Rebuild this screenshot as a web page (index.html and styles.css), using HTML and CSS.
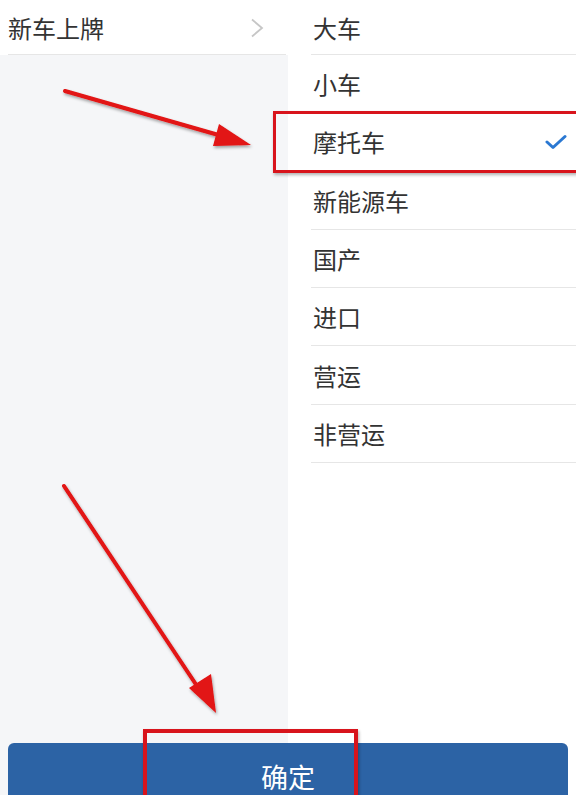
FILE: index.html
```html
<!DOCTYPE html>
<html lang="zh-CN">
<head>
  <meta charset="UTF-8" />
  <meta name="viewport" content="width=device-width, initial-scale=1.0"/>
  <title>车辆类型</title>
  <link rel="stylesheet" href="styles.css">
</head>
<body>
  <div class="screen">
    <div class="panes">
      <div class="side">
        <div class="side-item">
          <span>新车上牌</span>
          <svg class="chevron" width="14" height="20" viewBox="0 0 14 20">
            <path d="M2 1.5 L12 10 L2 18.5" fill="none" stroke="#c6c6c6" stroke-width="1.8"/>
          </svg>
        </div>
      </div>

      <ul class="options">
        <li class="option first">大车</li>
        <li class="option">小车</li>
        <li class="option selected">摩托车
          <svg class="check" width="22" height="16" viewBox="0 0 22 16">
            <path d="M2 8 L8 13.5 L20 2.5" fill="none" stroke="#2a78d2" stroke-width="3" stroke-linecap="round" stroke-linejoin="round"/>
          </svg>
        </li>
        <li class="option">新能源车</li>
        <li class="option">国产</li>
        <li class="option">进口</li>
        <li class="option">营运</li>
        <li class="option">非营运</li>
      </ul>
    </div>

    <div class="footer">
      <button class="confirm">确定</button>
    </div>
  </div>

  <!-- annotations drawn over the screenshot -->
  <div class="mark mark-option"></div>
  <div class="mark mark-button"></div>
  <svg class="arrows" width="576" height="795" viewBox="0 0 576 795">
    <defs>
      <filter id="shade" x="-10%" y="-10%" width="120%" height="120%">
        <feDropShadow dx="1" dy="2" stdDeviation="1.5" flood-color="#000" flood-opacity="0.35"/>
      </filter>
    </defs>
    <g filter="url(#shade)" fill="#e21313" stroke="#e21313">
      <line x1="65" y1="91" x2="222" y2="136" stroke-width="4" stroke-linecap="round"/>
      <polygon points="251,145 219,124 213,146" stroke="none"/>
      <line x1="64" y1="486" x2="199" y2="689" stroke-width="4" stroke-linecap="round"/>
      <polygon points="216,713 189,688 211,674" stroke="none"/>
    </g>
  </svg>
</body>
</html>
```

FILE: styles.css
```css
html, body {
  margin: 0;
  padding: 0;
  height: 795px;
  overflow: hidden;
}
body {
  font-family: "Noto Sans CJK SC", "Noto Sans", sans-serif;
  color: #333;
  background: #fff;
  position: relative;
}
.screen {
  height: 809px;
  display: flex;
  flex-direction: column;
}
.panes {
  flex: 1;
  display: flex;
}
.side {
  width: 288px;
  background: #f5f6f8;
}
.side-item {
  height: 55px;
  background: #fff;
  display: flex;
  align-items: center;
  justify-content: space-between;
  padding: 0 24px 0 8px;
  font-size: 24px;
  position: relative;
}
.side-item::after {
  content: "";
  position: absolute;
  left: 8px;
  right: 2px;
  bottom: 0;
  height: 1px;
  background: #e6e6e6;
}
.options {
  flex: 1;
  list-style: none;
  margin: 0;
  padding: 0 0 0 23px;
}
.option {
  height: 58.3px;
  box-sizing: border-box;
  border-bottom: 1px solid #e6e6e6;
  display: flex;
  align-items: center;
  justify-content: space-between;
  padding: 0 9px 0 2px;
  font-size: 24px;
}
.option.first {
  height: 55px;
}
.footer {
  padding: 13px 8px 0;
  background: linear-gradient(to right, #f5f6f8 288px, #fff 288px);
}
.confirm {
  display: block;
  width: 100%;
  height: 66px;
  border: none;
  border-radius: 6px;
  background: #2c63a5;
  color: #fff;
  font-family: inherit;
  font-size: 27px;
  padding: 0;
}
.mark {
  position: absolute;
  border: 3px solid #d8141c;
  box-shadow: 1px 2px 3px rgba(0, 0, 0, 0.3);
}
.mark-option {
  left: 273px;
  top: 111px;
  width: 310px;
  height: 56px;
}
.mark-button {
  left: 143px;
  top: 729px;
  width: 207px;
  height: 90px;
  border-width: 4px;
}
.arrows {
  position: absolute;
  left: 0;
  top: 0;
}
```
